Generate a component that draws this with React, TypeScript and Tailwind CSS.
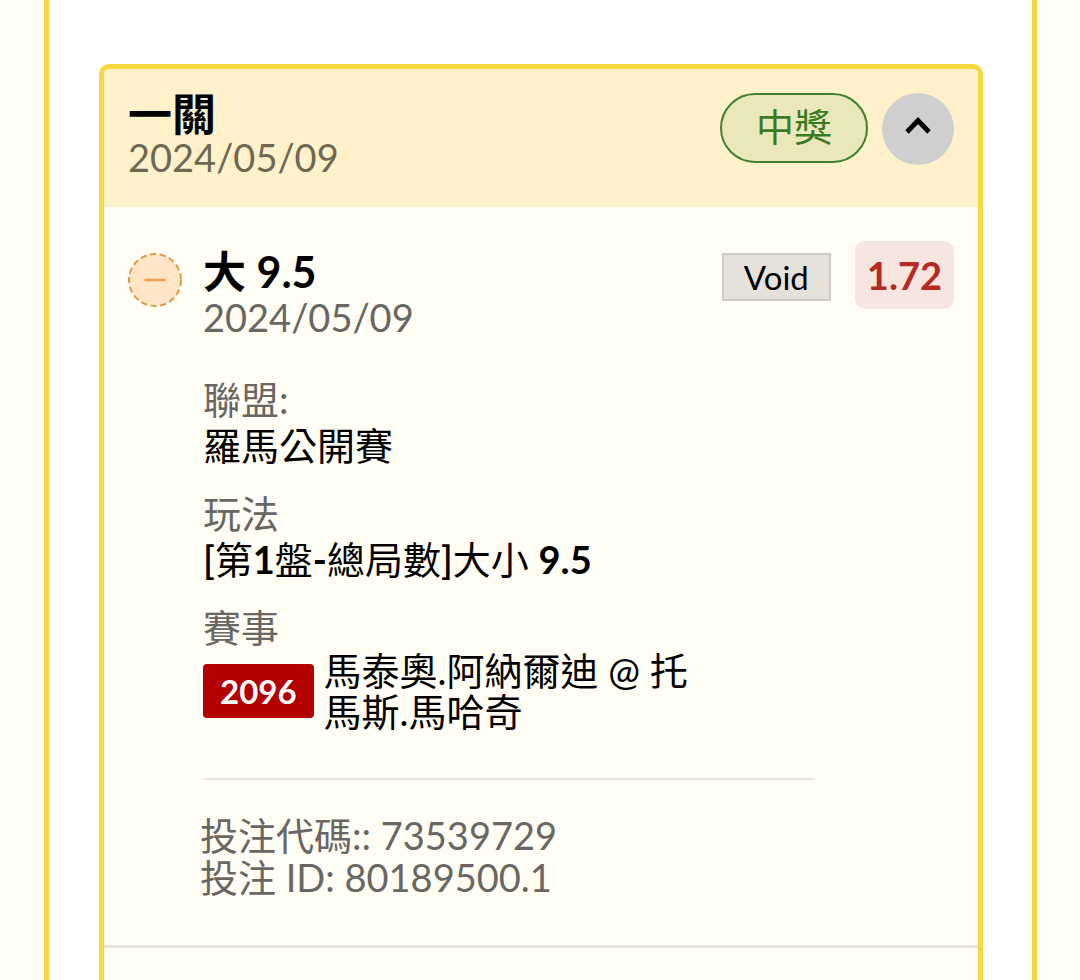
import { useState } from "react";
import type { ReactNode } from "react";

interface Bet {
  pick: string;
  line: string;
  date: string;
  status: string;
  odds: string;
  league: string;
  matchNo: string;
  players: string;
  code: string;
  betId: string;
}

const bet: Bet = {
  pick: "大",
  line: "9.5",
  date: "2024/05/09",
  status: "Void",
  odds: "1.72",
  league: "羅馬公開賽",
  matchNo: "2096",
  players: "馬泰奧.阿納爾迪 @ 托馬斯.馬哈奇",
  code: "73539729",
  betId: "80189500.1",
};

interface FieldProps {
  label: string;
  children: ReactNode;
}

const Field = ({ label, children }: FieldProps) => (
  <div className="leading-[46px]">
    <dt className="text-[#686762]">{label}</dt>
    <dd className="text-black">{children}</dd>
  </div>
);

const BetLeg = ({ bet }: { bet: Bet }) => (
  <article className="border-b-3 border-[#e6e2dd] pt-[34px] pb-[47px]">
    <div className="flex gap-[21px] px-6">
      {/* Void marker */}
      <svg className="mt-3 size-[54px] shrink-0" viewBox="0 0 54 54" fill="none">
        <circle cx="27" cy="27" r="26" fill="#fee5c8" stroke="#dc9a45" strokeWidth="2" strokeDasharray="6.2 3.53" />
        <path d="M16.5 27H37.5" stroke="#eba04a" strokeWidth="2.6" />
      </svg>

      <div className="min-w-0 flex-1">
        <header className="flex items-start justify-between">
          <div className="pt-2">
            <h3 className="text-[43px] leading-[46px] font-bold text-black">
              {bet.pick} {bet.line}
            </h3>
            <time className="block leading-11 text-[#686762]">{bet.date}</time>
          </div>
          <div className="flex items-start gap-6">
            <span className="mt-3 border-2 border-[#cdcbc5] bg-[#e5e2dc] px-5 text-[33px] leading-11 text-black">
              {bet.status}
            </span>
            <strong className="rounded-[10px] bg-[#f7e6df] px-3 leading-[68px] font-bold text-[#b32b22]">
              {bet.odds}
            </strong>
          </div>
        </header>

        <dl className="mt-[37px] mr-[139px] flex flex-col gap-[22px] border-b-2 border-[#e9e6e1] pb-[46px]">
          <Field label="聯盟:">{bet.league}</Field>
          <Field label="玩法">
            <span className="font-semibold">[</span>第<b>1</b>盤<b>-</b>總局數
            <span className="font-semibold">]</span>大小 <b>{bet.line}</b>
          </Field>
          <Field label="賽事">
            <span className="flex items-center gap-[10px]">
              <span className="rounded-sm bg-[#b50000] px-[17px] text-[33px] leading-[54px] font-bold text-white">
                {bet.matchNo}
              </span>
              <span className="max-w-[370px] leading-[41px]">{bet.players}</span>
            </span>
          </Field>
        </dl>
      </div>
    </div>

    <div className="mt-[34px] pl-24 leading-[42px] text-[#686762]">
      <p>投注代碼:: {bet.code}</p>
      <p>投注 ID: {bet.betId}</p>
    </div>
  </article>
);

const App = () => {
  const [open, setOpen] = useState(true);

  return (
    <div className="flex min-h-screen bg-[#fffdf6] pr-[43px] pl-11 font-[Lato,'Noto_Sans_CJK_TC',sans-serif] text-[38px]" lang="zh-Hant">
      <main className="flex min-w-0 flex-1 flex-col border-x-5 border-[#f8d840] bg-white pt-16 pr-[49px] pl-[50px]">
        <section className="flex-1 overflow-hidden rounded-t-[10px] border-5 border-b-0 border-[#f8d840] bg-[#fffdf4]">
          <header className="flex items-start justify-between bg-[#fff2cb] px-6 pt-6 pb-7">
            <div>
              <h2 className="text-[44px] leading-[42px] font-bold text-black">一關</h2>
              <time className="block leading-11 text-[#6f6852]">{bet.date}</time>
            </div>
            <div className="flex items-start gap-[14px]">
              <span className="rounded-full border-2 border-[#3f7f2e] bg-[#eae8b9] px-[34px] pb-1 leading-[62px] text-[#3a7a22]">
                中獎
              </span>
              <button
                type="button"
                aria-expanded={open}
                aria-label="一關"
                onClick={() => setOpen(!open)}
                className="flex size-[72px] items-center justify-center rounded-full bg-[#cfcfcf]"
              >
                <svg className={open ? "size-9" : "size-9 rotate-180"} viewBox="0 0 36 36" fill="none">
                  <path d="M7 21L18 9.5L29 21" stroke="#000" strokeWidth="4.8" />
                </svg>
              </button>
            </div>
          </header>
          {open && <BetLeg bet={bet} />}
        </section>
      </main>
    </div>
  );
};

export default App;
